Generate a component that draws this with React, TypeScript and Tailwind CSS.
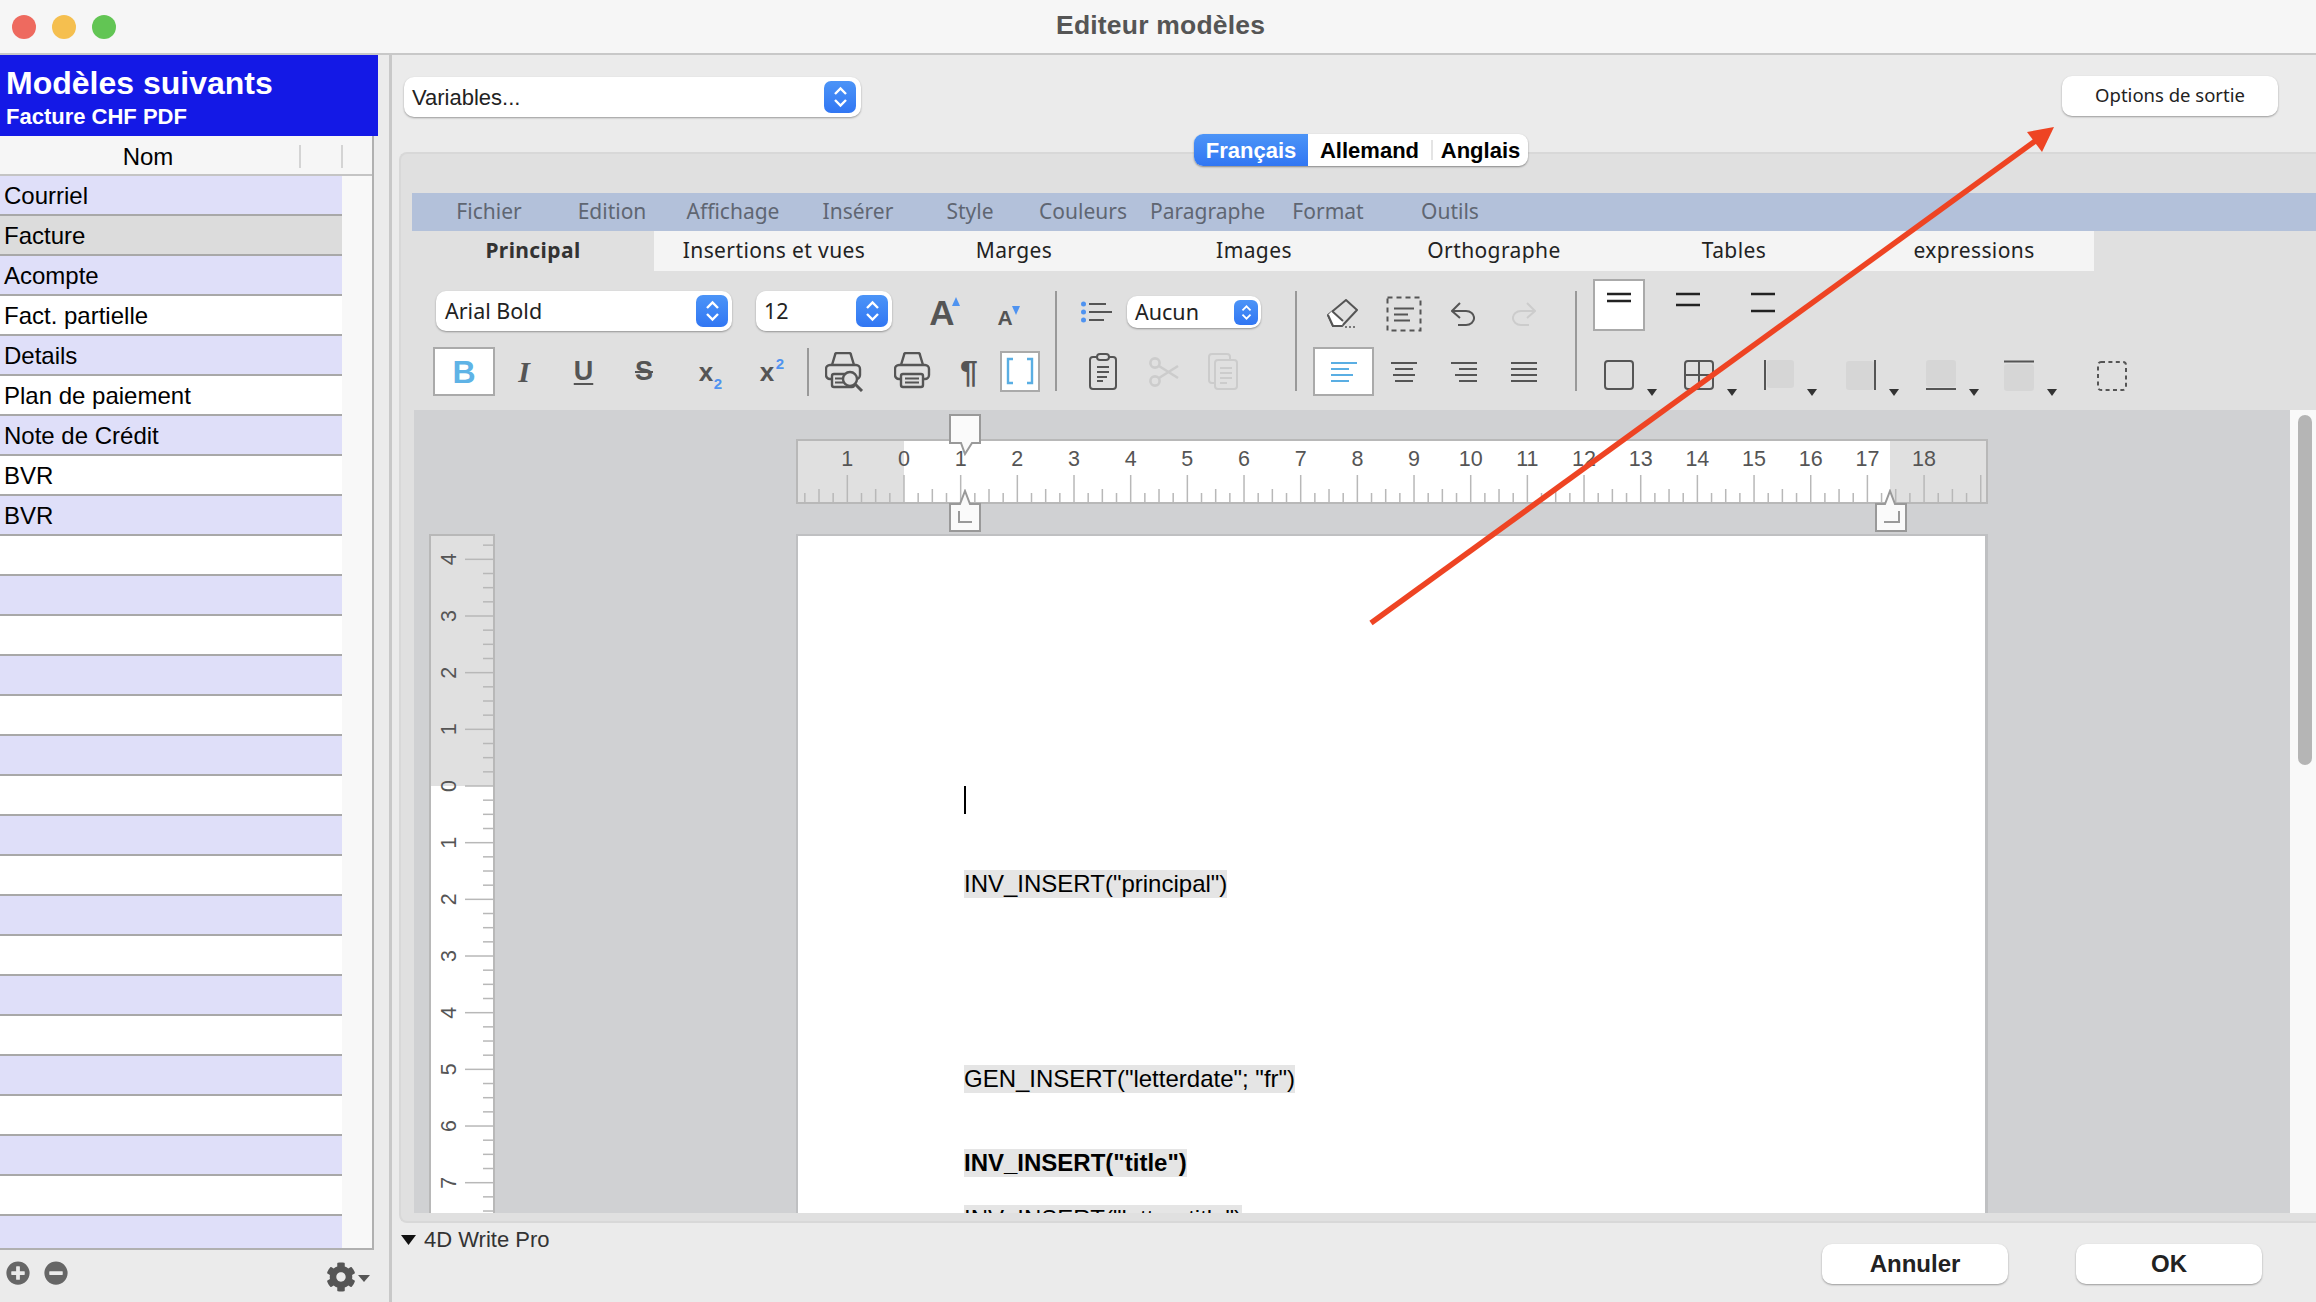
import { FaCog, FaMinusCircle, FaPlusCircle } from 'react-icons/fa'

const rows = [
  'Courriel',
  'Facture',
  'Acompte',
  'Fact. partielle',
  'Details',
  'Plan de paiement',
  'Note de Crédit',
  'BVR',
  'BVR',
  ...Array(18).fill(''),
]

const menus = [
  ['Fichier', 'w-[122px]'],
  ['Edition', 'w-[124px]'],
  ['Affichage', 'w-[118px]'],
  ['Insérer', 'w-[132px]'],
  ['Style', 'w-[92px]'],
  ['Couleurs', 'w-[134px]'],
  ['Paragraphe', 'w-[110px]'],
  ['Format', 'w-[136px]'],
  ['Outils', 'w-[108px]'],
]

const subTabs = ['Insertions et vues', 'Marges', 'Images', 'Orthographe', 'Tables', 'expressions']

const CM = 56.67

function Stepper({ small }: { small?: boolean }) {
  return (
    <div
      className={
        small
          ? 'flex h-[25px] w-[24px] shrink-0 items-center justify-center rounded-[6px] bg-linear-to-b from-[#4c94f7] to-[#3176f3]'
          : 'flex h-[32px] w-[32px] shrink-0 items-center justify-center rounded-[7px] bg-linear-to-b from-[#4c94f7] to-[#3176f3]'
      }
    >
      <svg width={small ? 11 : 15} height={small ? 17 : 22} viewBox="0 0 15 22" fill="none" stroke="#fff" strokeWidth="2.4">
        <path d="M2 8 L7.5 2.5 L13 8 M2 14 L7.5 19.5 L13 14" />
      </svg>
    </div>
  )
}

function Select({ label, className, small, text }: { label: string; className: string; small?: boolean; text: string }) {
  return (
    <div className={`flex items-center justify-between rounded-[10px] bg-white shadow-[0_1px_2px_rgba(0,0,0,0.35)] ${className}`}>
      <span className={text}>{label}</span>
      <Stepper small={small} />
    </div>
  )
}

function Caret() {
  return (
    <svg width="10" height="7" viewBox="0 0 10 7" className="mb-[-5px] ml-[12px] shrink-0">
      <path d="M0 0 H10 L5 7 Z" fill="#333" />
    </svg>
  )
}

function Printer({ preview }: { preview?: boolean }) {
  return (
    <svg width="42" height="40" viewBox="0 0 42 40" fill="none" stroke="#555" strokeWidth="2.4">
      <path d="M8 27H5a4 4 0 0 1-4-4v-6a4 4 0 0 1 4-4h26a4 4 0 0 1 4 4v6a4 4 0 0 1-4 4h-3" />
      <path d="M7 13 L10 3 a2 2 0 0 1 2-2 h12 a2 2 0 0 1 2 2 L29 13" />
      <rect x="7" y="22" width="22" height="13" rx="2" fill="#e0e0e0" />
      {preview ? (
        <>
          <path d="M10 26.5 H20 M10 30.5 H20" strokeWidth="2" />
          <circle cx="25" cy="27" r="7" fill="#e0e0e0" />
          <path d="M30 32 L37 39" strokeWidth="3" />
        </>
      ) : (
        <path d="M11 26.5 H25 M11 30.5 H25" strokeWidth="2" />
      )}
    </svg>
  )
}

function Align({ lines, color }: { lines: [number, number][]; color: string }) {
  return (
    <svg width="28" height="22" viewBox="0 0 28 22" stroke={color} strokeWidth="2">
      {lines.map(([a, b], i) => (
        <path key={i} d={`M${a} ${2 + i * 6} H${b}`} />
      ))}
    </svg>
  )
}

function Spacing({ gap }: { gap: number }) {
  return (
    <svg width="26" height="22" viewBox="0 0 26 22" stroke="#222" strokeWidth="2.4">
      <path d={`M1 2 H25 M1 ${2 + gap} H25`} />
    </svg>
  )
}

function BorderIcon({ kind }: { kind: 'box' | 'grid' | 'left' | 'right' | 'bottom' | 'top' }) {
  const fill = '#d6d6d6'
  return (
    <svg width="31" height="31" viewBox="0 0 31 31" fill="none" className="shrink-0">
      {kind === 'box' && <rect x="1" y="1" width="28" height="28" rx="3" stroke="#555" strokeWidth="2" />}
      {kind === 'grid' && (
        <>
          <rect x="1" y="1" width="28" height="28" rx="3" stroke="#555" strokeWidth="2" />
          <path d="M15 1 V29 M1 15 H29" stroke="#555" strokeWidth="2" />
        </>
      )}
      {kind === 'left' && (
        <>
          <rect x="3" y="0" width="27" height="28" rx="3" fill={fill} />
          <path d="M1 0 V30" stroke="#555" strokeWidth="2" />
        </>
      )}
      {kind === 'right' && (
        <>
          <rect x="0" y="1" width="28" height="29" rx="3" fill={fill} />
          <path d="M29 0 V30" stroke="#555" strokeWidth="2" />
        </>
      )}
      {kind === 'bottom' && (
        <>
          <rect x="0" y="0" width="30" height="27" rx="3" fill={fill} />
          <path d="M0 29 H30" stroke="#555" strokeWidth="2" />
        </>
      )}
      {kind === 'top' && (
        <>
          <rect x="0" y="4" width="30" height="27" rx="3" fill={fill} />
          <path d="M0 1.5 H30" stroke="#555" strokeWidth="2" />
        </>
      )}
    </svg>
  )
}

function Toolbar() {
  return (
    <div className="flex h-[139px] shrink-0">
      <div className="ml-[21px] flex w-[622px] shrink-0 flex-col">
        <div className="mt-[20px] flex h-[40px] items-center">
          <Select label="Arial Bold" className="ml-[3px] h-[40px] w-[296px] pr-[4px] pl-[9px]" text="font-['Noto_Sans'] text-[21.5px] text-[#222]" />
          <Select label="12" className="ml-[24px] h-[40px] w-[136px] pr-[4px] pl-[8px]" text="font-['Noto_Sans'] text-[21.5px] text-[#222]" />
          <svg width="36" height="44" viewBox="0 0 36 44" className="ml-[34px] shrink-0">
            <text x="16" y="36" textAnchor="middle" fontSize="35" fontWeight="700" fill="#555">A</text>
            <path d="M30 8 L34 17 H26 Z" fill="#4f93f0" />
          </svg>
          <svg width="34" height="44" viewBox="0 0 34 44" className="ml-[28px] shrink-0">
            <text x="15" y="36" textAnchor="middle" fontSize="21" fontWeight="700" fill="#555">A</text>
            <path d="M22 17 H30 L26 26 Z" fill="#4f93f0" />
          </svg>
        </div>
        <div className="mt-[16px] flex h-[49px] items-center">
          <div className="flex h-[49px] w-[62px] shrink-0 items-center justify-center border-2 border-[#aaa] bg-white text-[32px] font-bold text-[#5fb3e6]">B</div>
          <div className="flex w-[58px] justify-center font-['Liberation_Serif'] text-[30px] font-bold text-[#555] italic">I</div>
          <div className="flex w-[61px] justify-center text-[27px] font-bold text-[#555] underline decoration-2 underline-offset-[3px]">U</div>
          <div className="flex w-[60px] justify-center text-[27px] font-bold text-[#555] line-through decoration-2">S</div>
          <svg width="68" height="44" viewBox="0 0 68 44" className="shrink-0">
            <text x="32" y="31" textAnchor="middle" fontSize="26" fontWeight="700" fill="#555">x</text>
            <text x="44" y="39" textAnchor="middle" fontSize="15" fontWeight="700" fill="#4f93f0">2</text>
          </svg>
          <svg width="52" height="44" viewBox="0 0 52 44" className="shrink-0">
            <text x="25" y="31" textAnchor="middle" fontSize="26" fontWeight="700" fill="#555">x</text>
            <text x="38" y="19" textAnchor="middle" fontSize="15" fontWeight="700" fill="#4f93f0">2</text>
          </svg>
          <div className="ml-[13px] h-[48px] w-[2px] shrink-0 bg-[#999]" />
          <div className="flex w-[70px] justify-center pl-[3px]"><Printer preview /></div>
          <div className="flex w-[66px] justify-center pl-[6px]"><Printer /></div>
          <div className="flex w-[48px] justify-center text-[32px] font-bold text-[#555]">¶</div>
          <div className="mt-[-1px] ml-[7px] flex h-[41px] w-[40px] shrink-0 items-center justify-center border-2 border-[#aaa] bg-white">
            <svg width="28" height="28" viewBox="0 0 28 28" fill="none" stroke="#5aaee3" strokeWidth="2.4">
              <path d="M7 2 H2 V26 H7 M21 2 H26 V26 H21" />
            </svg>
          </div>
        </div>
      </div>
      <div className="mt-[20px] h-[100px] w-[2px] shrink-0 bg-[#999]" />
      <div className="flex w-[238px] shrink-0 flex-col">
        <div className="mt-[25px] flex h-[32px] items-center">
          <svg width="32" height="24" viewBox="0 0 32 24" className="ml-[24px] shrink-0" stroke="#555" strokeWidth="2">
            <path d="M8 4 H25 M8 12 H31 M8 20 H23" />
            <circle cx="2.5" cy="4" r="2.5" fill="#4f93f0" stroke="none" />
            <circle cx="2.5" cy="12" r="2.5" fill="#4f93f0" stroke="none" />
            <circle cx="2.5" cy="20" r="2.5" fill="#4f93f0" stroke="none" />
          </svg>
          <Select small label="Aucun" className="ml-[14px] h-[32px] w-[134px] pr-[3px] pl-[8px]" text="font-['Noto_Sans'] text-[21.5px] text-[#222]" />
        </div>
        <div className="mt-[19px] flex h-[49px] items-center">
          <svg width="28" height="37" viewBox="0 0 28 37" fill="none" stroke="#555" strokeWidth="2" className="ml-[32px] shrink-0">
            <rect x="1" y="4" width="26" height="32" rx="3" />
            <rect x="8" y="1" width="12" height="6" rx="3" fill="#e0e0e0" />
            <path d="M8 14 H20 M8 19 H20 M8 24 H18 M8 28 H14" />
          </svg>
          <svg width="30" height="30" viewBox="0 0 30 30" fill="none" stroke="#ccc" strokeWidth="2.6" className="ml-[32px] shrink-0">
            <circle cx="6" cy="6" r="4.6" />
            <circle cx="6" cy="24" r="4.6" />
            <path d="M10 9 L29 21 M10 21 L29 9" />
          </svg>
          <svg width="30" height="37" viewBox="0 0 30 37" fill="none" stroke="#ccc" strokeWidth="2" className="ml-[29px] shrink-0">
            <rect x="1" y="1" width="21" height="29" rx="3" />
            <rect x="7" y="7" width="22" height="29" rx="3" fill="#e0e0e0" />
            <path d="M12 15 H24 M12 20 H24 M12 25 H24 M12 30 H19" />
          </svg>
        </div>
      </div>
      <div className="mt-[20px] h-[100px] w-[2px] shrink-0 bg-[#999]" />
      <div className="flex w-[278px] shrink-0 flex-col">
        <div className="mt-[25px] flex h-[36px] items-center">
          <svg width="33" height="30" viewBox="0 0 33 30" fill="none" stroke="#555" strokeWidth="2" className="ml-[29px] shrink-0">
            <path d="M2 16 L7 27 H16 L31 11 L20 1 Z" strokeLinejoin="round" />
            <path d="M2 16 L6 12 L17 22 L16 27 H7 Z" fill="#fff" stroke="none" />
            <path d="M2 16 L7 27 H16 M6 12 L17 22" />
            <path d="M19 28 H30" strokeDasharray="2 2" strokeWidth="1.5" />
          </svg>
          <svg width="36" height="36" viewBox="0 0 36 36" fill="none" stroke="#555" strokeWidth="2" className="ml-[27px] shrink-0">
            <rect x="1.5" y="1.5" width="33" height="33" strokeDasharray="5 4" />
            <path d="M8 12.5 H28 M8 18.5 H22 M8 24.5 H24" />
          </svg>
          <svg width="24" height="24" viewBox="0 0 24 24" fill="none" stroke="#555" strokeWidth="2" className="ml-[29px] shrink-0">
            <path d="M9 1 L1 9 L9 16 M1 9 H15 a7.5 6.5 0 0 1 0 14 H7" />
          </svg>
          <svg width="24" height="24" viewBox="0 0 24 24" fill="none" stroke="#ccc" strokeWidth="2" className="ml-[37px] shrink-0">
            <path d="M15 1 L23 9 L15 16 M23 9 H9 a7.5 6.5 0 0 0 0 14 H17" />
          </svg>
        </div>
        <div className="mt-[15px] flex h-[49px] items-center">
          <div className="ml-[16px] flex h-[49px] w-[61px] shrink-0 items-center justify-center border-2 border-[#aaa] bg-white">
            <Align color="#5aaee3" lines={[[1, 27], [1, 19], [1, 23], [1, 19]]} />
          </div>
          <div className="flex w-[60px] justify-center"><Align color="#555" lines={[[1, 27], [5, 23], [3, 25], [5, 23]]} /></div>
          <div className="flex w-[60px] justify-center"><Align color="#555" lines={[[1, 27], [9, 27], [5, 27], [9, 27]]} /></div>
          <div className="flex w-[60px] justify-center"><Align color="#555" lines={[[1, 27], [1, 27], [1, 27], [1, 27]]} /></div>
        </div>
      </div>
      <div className="mt-[20px] h-[100px] w-[2px] shrink-0 bg-[#999]" />
      <div className="flex flex-1 flex-col">
        <div className="mt-[8px] ml-[16px] flex h-[52px] items-start">
          <div className="flex h-[52px] w-[52px] shrink-0 items-start justify-center border-2 border-[#aaa] bg-white pt-[11px]"><Spacing gap={7} /></div>
          <div className="ml-[30px] pt-[13px]"><Spacing gap={11} /></div>
          <div className="ml-[49px] pt-[13px]"><Spacing gap={17} /></div>
        </div>
        <div className="mt-[29px] ml-[27px] flex items-end">
          <div className="flex w-[80px] items-end"><BorderIcon kind="box" /><Caret /></div>
          <div className="flex w-[80px] items-end"><BorderIcon kind="grid" /><Caret /></div>
          <div className="flex w-[82px] items-end"><BorderIcon kind="left" /><Caret /></div>
          <div className="flex w-[80px] items-end"><BorderIcon kind="right" /><Caret /></div>
          <div className="flex w-[78px] items-end"><BorderIcon kind="bottom" /><Caret /></div>
          <div className="flex w-[93px] items-end"><BorderIcon kind="top" /><Caret /></div>
          <svg width="30" height="30" viewBox="0 0 30 30" fill="none" stroke="#555" strokeWidth="2" className="shrink-0">
            <rect x="1" y="1" width="28" height="28" rx="3" strokeDasharray="4 3.4" />
          </svg>
        </div>
      </div>
    </div>
  )
}

function HRuler() {
  const ticks = []
  for (let k = -1; k <= 19; k++) {
    const x = 108 + k * CM
    ticks.push(<path key={`l${k}`} d={`M${x} 36 V63`} />)
    ticks.push(<path key={`q${k}`} d={`M${x + CM / 4} 54 V63 M${x + CM / 2} 50 V63 M${x + (CM * 3) / 4} 54 V63`} />)
    if (k === -1) ticks.push(<path key="qm" d={`M${x - CM / 4} 54 V63 M${x - CM / 2} 50 V63 M${x - (CM * 3) / 4} 54 V63`} />)
  }
  const labels = []
  for (let k = -1; k <= 18; k++) {
    labels.push(
      <text key={k} x={108 + k * CM} y={27} textAnchor="middle" fontSize="21.5" fill="#555">
        {Math.abs(k)}
      </text>,
    )
  }
  return (
    <svg width="1192" height="65" viewBox="0 0 1192 65" className="block">
      <rect x="1" y="1" width="1190" height="63" fill="#e0e0e0" stroke="#b8b8b8" strokeWidth="2" />
      <rect x="108" y="2" width="986" height="61" fill="#fff" />
      {labels}
      <g stroke="#b8b8b8" strokeWidth="1.5">{ticks}</g>
    </svg>
  )
}

function VRuler() {
  const marks = []
  for (let k = -4; k <= 7; k++) {
    const y = 252 + k * CM
    marks.push(<path key={`l${k}`} d={`M36 ${y} H64`} stroke="#b8b8b8" strokeWidth="1.5" />)
    for (const f of [-0.75, -0.5, -0.25, 0.25, 0.5, 0.75]) {
      if (f < 0 && k !== -4) continue
      const yy = y + f * CM
      marks.push(<path key={`m${k}${f}`} d={`M54 ${yy} H64`} stroke="#b8b8b8" strokeWidth="1.5" />)
    }
    marks.push(
      <text key={`t${k}`} x={20} y={y} textAnchor="middle" dominantBaseline="central" fontSize="21.5" fill="#555" transform={`rotate(-90 20 ${y})`}>
        {Math.abs(k)}
      </text>,
    )
  }
  return (
    <svg width="66" height="682" viewBox="0 0 66 682" className="block shrink-0">
      <rect x="1" y="1" width="64" height="684" fill="#e0e0e0" stroke="#b8b8b8" strokeWidth="2" />
      <rect x="2" y="252" width="62" height="432" fill="#fff" />
      {marks}
    </svg>
  )
}

function Field({ children, className }: { children: string; className: string }) {
  return <div className={`h-[28px] w-fit bg-[#e5e5e5] text-[24px] leading-[28px] text-black ${className}`}>{children}</div>
}

export default function App() {
  return (
    <div className="relative flex h-[1302px] w-[2316px] flex-col overflow-hidden bg-[#ebebeb] font-['Liberation_Sans',sans-serif]">
      <div className="flex h-[55px] shrink-0 items-center border-b-2 border-[#c8c8c8] bg-[#f6f6f6]">
        <div className="ml-[12px] flex gap-[16px]">
          <div className="h-[24px] w-[24px] rounded-full bg-[#ee6a5f]" />
          <div className="h-[24px] w-[24px] rounded-full bg-[#f5bf4f]" />
          <div className="h-[24px] w-[24px] rounded-full bg-[#62c554]" />
        </div>
        <div className="mt-[-2px] ml-[940px] text-[26.5px] font-bold tracking-[0.2px] text-[#555]">Editeur modèles</div>
      </div>

      <div className="flex min-h-0 flex-1">
        <aside className="flex w-[392px] shrink-0 flex-col border-r-[3px] border-[#c8c8c8]">
          <div className="flex h-[81px] w-[378px] shrink-0 flex-col bg-[#1419e6] pt-[8px] pl-[6px] font-bold text-white">
            <div className="text-[32px] leading-[40px]">Modèles suivants</div>
            <div className="mt-[1px] text-[22px] leading-[26px]">Facture CHF PDF</div>
          </div>
          <div className="flex h-[1114px] w-[374px] shrink-0 flex-col overflow-hidden border-r-2 border-b-2 border-[#b0b0b0] bg-[#f8f8f8]">
            <div className="flex h-[40px] shrink-0 items-center border-b-2 border-[#c4c4c4] bg-[#f6f6f6] pt-[3px]">
              <div className="w-[298px] pr-[2px] text-center text-[24px] text-black">Nom</div>
              <div className="ml-[1px] h-[23px] w-[2px] bg-[#d4d4d4]" />
              <div className="ml-[40px] h-[23px] w-[2px] bg-[#d4d4d4]" />
            </div>
            <div className="min-h-0 flex-1 overflow-hidden">
              {rows.map((name, i) => (
                <div
                  key={i}
                  className={`flex h-[40px] w-[342px] items-center border-b-[2px] border-[#a8a8a8] pt-[1px] pl-[4px] text-[24px] text-black ${
                    i === 1 ? 'bg-[#dcdcdc]' : i % 2 === 0 ? 'bg-[#dfdff9]' : 'bg-white'
                  }`}
                >
                  {name}
                </div>
              ))}
            </div>
          </div>
          <div className="flex flex-1 items-start pt-[11px] pl-[6px] text-[#666]">
            <FaPlusCircle size={24} />
            <FaMinusCircle size={24} className="ml-[14px]" />
            <FaCog size={30} className="mt-[1px] ml-[258px] text-[#555]" />
            <svg width="12" height="7" viewBox="0 0 12 7" className="mt-[14px] ml-[2px]">
              <path d="M0 0 H12 L6 7 Z" fill="#555" />
            </svg>
          </div>
        </aside>

        <main className="flex min-w-0 flex-1 flex-col">
          <div className="flex h-[97px] shrink-0 items-start justify-between pt-[22px] pr-[38px] pl-[12px]">
            <Select label="Variables..." className="h-[40px] w-[457px] pr-[5px] pl-[8px]" text="text-[22px] text-[#222]" />
            <button className="mt-[-1px] h-[40px] w-[216px] rounded-[10px] bg-white pb-[2px] font-['Noto_Sans'] text-[18.5px] text-[#222] shadow-[0_1px_2px_rgba(0,0,0,0.35)]">
              Options de sortie
            </button>
          </div>

          <section className="ml-[7px] flex h-[1071px] shrink-0 flex-col rounded-tl-[8px] rounded-bl-[8px] border-y-2 border-l-2 border-[#d8d8d8] bg-[#e0e0e0]">
            <div className="mt-[-20px] ml-[793px] flex h-[32px] w-[334px] shrink-0 overflow-hidden rounded-[9px] bg-white text-[22px] font-bold shadow-[0_1px_2px_rgba(0,0,0,0.4)]">
              <div className="flex w-[114px] items-center justify-center bg-linear-to-b from-[#4c94f7] to-[#3176f3] text-white">Français</div>
              <div className="flex w-[123px] items-center justify-center text-black">Allemand</div>
              <div className="my-[6px] w-[2px] bg-[#e4e4e4]" />
              <div className="flex flex-1 items-center justify-center text-black">Anglais</div>
            </div>

            <div className="mt-[27px] ml-[11px] flex h-[38px] shrink-0 items-center bg-[#b3c1da] pl-[16px] font-['Noto_Sans'] text-[21px] text-[#5f6672]">
              {menus.map(([label, w]) => (
                <div key={label} className={`${w} shrink-0 text-center`}>
                  {label}
                </div>
              ))}
            </div>

            <div className="ml-[11px] flex h-[40px] shrink-0 items-center font-['Noto_Sans'] text-[21px] tracking-[0.4px] text-[#222]">
              <div className="flex h-full w-[242px] shrink-0 items-center justify-center font-bold text-[#333]">Principal</div>
              {subTabs.map((t) => (
                <div key={t} className="flex h-full w-[240px] shrink-0 items-center justify-center bg-[#f4f4f4]">
                  {t}
                </div>
              ))}
            </div>

            <div className="ml-[11px] flex min-h-0 flex-1 flex-col">
              <Toolbar />
              <div className="flex min-h-0 flex-1">
                <div className="ml-[2px] flex w-[1876px] shrink-0 flex-col overflow-hidden bg-[#d0d1d3]">
                  <div className="relative mt-[29px] ml-[382px] w-[1192px] shrink-0">
                    <HRuler />
                    <svg width="34" height="44" viewBox="0 0 34 44" fill="#fafafa" stroke="#999" strokeWidth="2" className="absolute top-[-26px] left-[152px]">
                      <path d="M2 2 H32 V30 H24 L17 41 L13 30 H2 Z" />
                    </svg>
                    <svg width="34" height="44" viewBox="0 0 34 44" fill="#fafafa" stroke="#999" strokeWidth="2" className="absolute top-[50px] left-[152px]">
                      <path d="M2 15 H12 L17 2 L22 15 H32 V42 H2 Z" />
                      <path d="M11 22 V33 H24" fill="none" />
                    </svg>
                    <svg width="34" height="44" viewBox="0 0 34 44" fill="#fafafa" stroke="#999" strokeWidth="2" className="absolute top-[50px] left-[1078px]">
                      <path d="M2 15 H11 L16 2 L21 15 H32 V42 H2 Z" />
                      <path d="M25 22 V33 H10" fill="none" />
                    </svg>
                  </div>
                  <div className="mt-[30px] ml-[15px] flex min-h-0 flex-1">
                    <VRuler />
                    <div className="ml-[301px] w-[1192px] shrink-0 overflow-hidden border-t-2 border-r-[3px] border-l-2 border-[#bfc0c2] bg-white pt-[250px] pl-[166px]">
                      <div className="h-[28px] w-[2px] bg-black" />
                      <Field className="mt-[56px]">INV_INSERT("principal")</Field>
                      <Field className="mt-[167px]">GEN_INSERT("letterdate"; "fr")</Field>
                      <Field className="mt-[56px] font-bold">INV_INSERT("title")</Field>
                      <Field className="mt-[28px]">INV_INSERT("letter_title")</Field>
                    </div>
                  </div>
                </div>
                <div className="flex-1 bg-[#f9f9f9] pt-[5px] pl-[8px]">
                  <div className="h-[350px] w-[14px] rounded-full bg-[#b5b5b5]" />
                </div>
              </div>
              <div className="h-[8px] shrink-0" />
            </div>
          </section>

          <div className="flex min-h-0 flex-1 items-start pr-[54px]">
            <div className="ml-[9px] flex shrink-0 items-center gap-[8px] text-[22px] whitespace-nowrap text-[#333]">
              <svg width="15" height="10" viewBox="0 0 15 10">
                <path d="M0 0 H15 L7.5 10 Z" fill="#111" />
              </svg>
              4D Write Pro
            </div>
            <button className="mt-[21px] ml-auto h-[40px] w-[186px] rounded-[10px] bg-white text-[24px] font-bold text-[#222] shadow-[0_1px_2px_rgba(0,0,0,0.35)]">Annuler</button>
            <button className="mt-[21px] ml-[68px] h-[40px] w-[186px] rounded-[10px] bg-white text-[24px] font-bold text-[#222] shadow-[0_1px_2px_rgba(0,0,0,0.35)]">OK</button>
          </div>
        </main>
      </div>

      <svg width="2316" height="1302" viewBox="0 0 2316 1302" className="pointer-events-none absolute top-0 left-0">
        <path d="M1371 623 L2038 139" stroke="#ee4423" strokeWidth="5.5" />
        <path d="M2054 127 L2027 132 L2042 152 Z" fill="#ee4423" />
      </svg>
    </div>
  )
}
